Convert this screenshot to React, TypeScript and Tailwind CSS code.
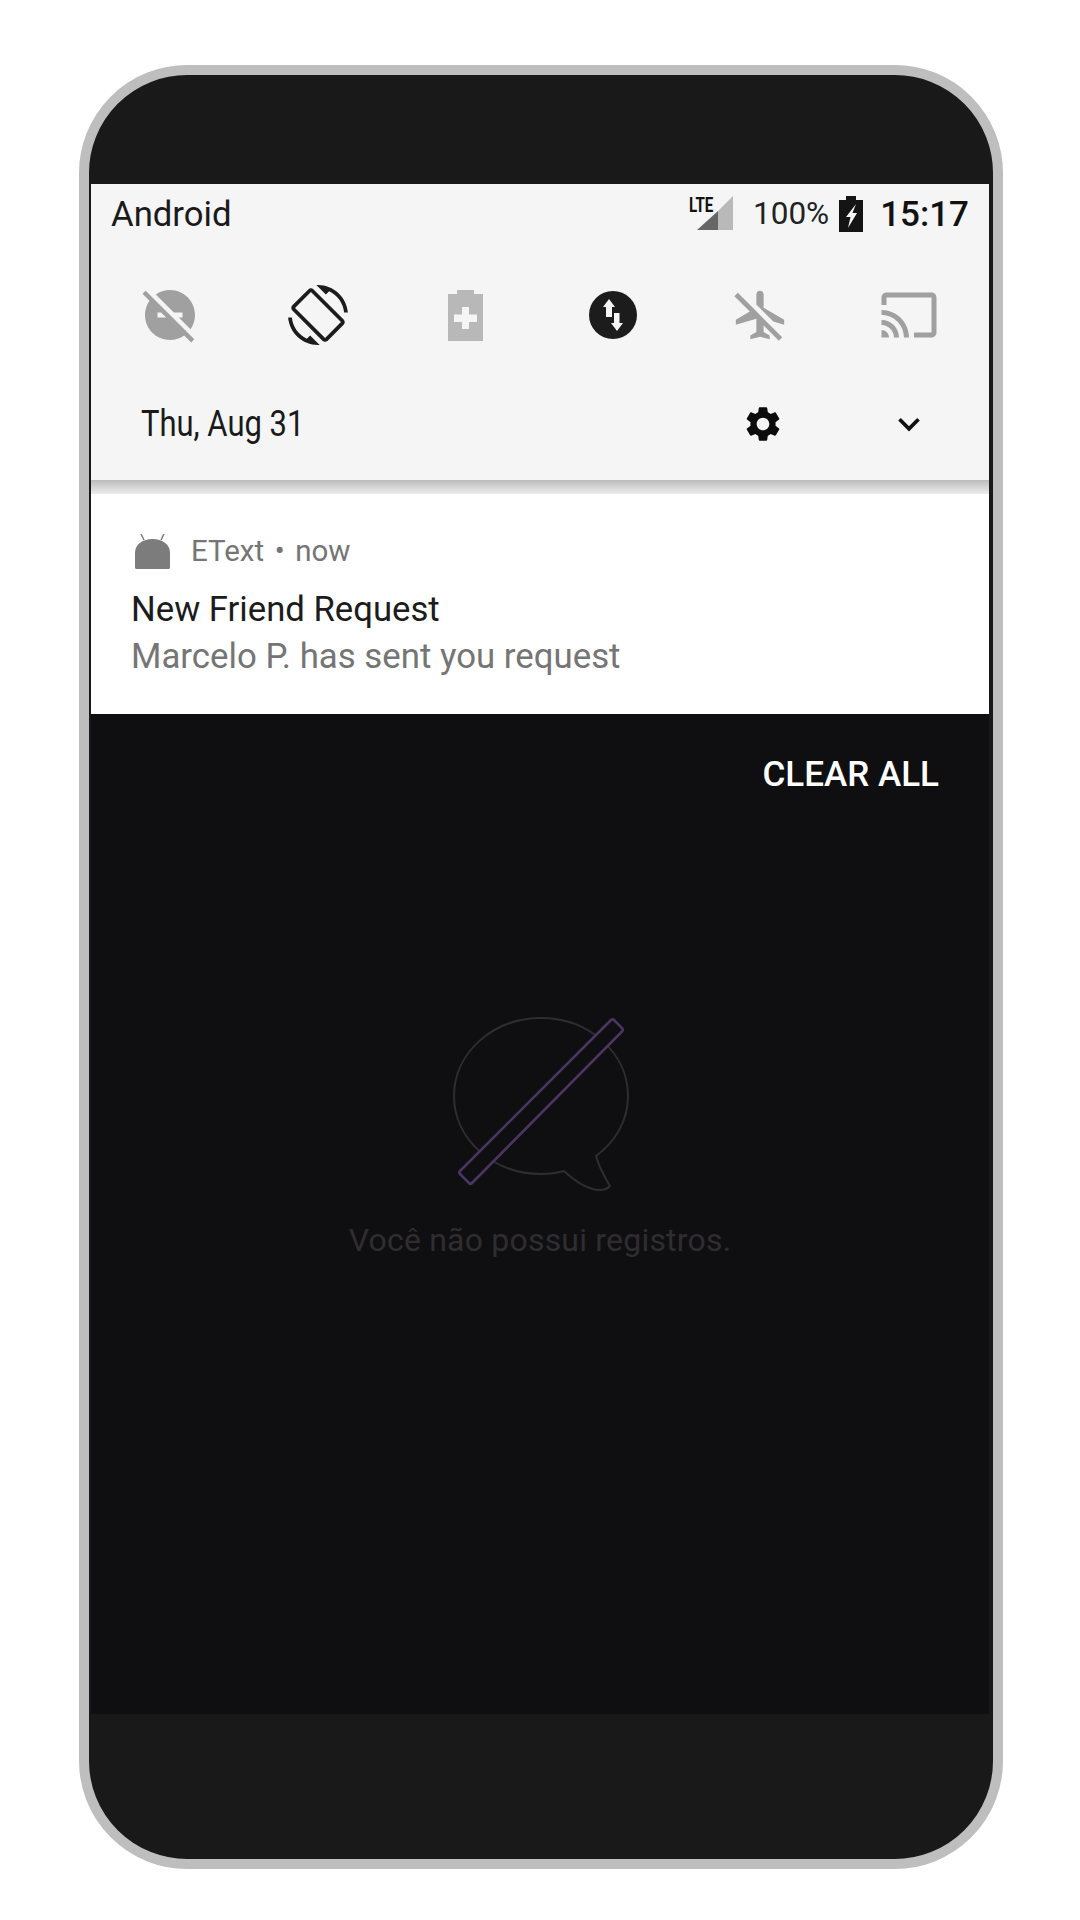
const roboto = "font-['Roboto',sans-serif]";

const QuickIcon = ({ d, color, size = 60 }: { d: string; color: string; size?: number }) => (
  <div className="flex w-[60px] justify-center">
    <svg width={size} height={size} viewBox="0 0 24 24" fill={color}>
      <path d={d} />
    </svg>
  </div>
);

const StatusBar = () => (
  <div className="flex h-[58px] items-center pl-[20px] pr-[20px] pt-[2px] text-[#1a1a1a]">
    <span className="text-[34.7px] leading-none">Android</span>
    <div className="relative ml-auto h-[36px] w-[44px]">
      <svg className="absolute right-0 top-0" width="36" height="34" viewBox="0 0 36 34">
        <path d="M36 0v34H21V15z" fill="#b9b9b9" />
        <path d="M21 15v19H0z" fill="#666666" />
      </svg>
      <span className="absolute left-0 top-[-3px] origin-left scale-x-[0.72] text-[21px] font-bold leading-[24px] text-[#111]">
        LTE
      </span>
    </div>
    <span className="ml-[20px] text-[31.5px] leading-none text-[#222]">100%</span>
    <svg className="ml-[10px]" width="24" height="36" viewBox="0 0 24 36">
      <path d="M0 4h7V0h10v4h7v32H0z" fill="#141414" />
      <path d="M17 8 7 21h4.500L9 32l9-15h-4.500z" fill="#f5f5f5" />
    </svg>
    <span className="ml-[17px] text-[35px] font-medium leading-none text-[#111]">15:17</span>
  </div>
);

const QuickSettings = () => (
  <div className="flex h-[146px] items-center justify-between pl-[49px] pr-[50px]">
    <QuickIcon
      color="#a0a0a0"
      d="M17 11v2h-1.46l4.68 4.68C21.34 16.07 22 14.11 22 12c0-5.52-4.48-10-10-10-2.11 0-4.07.66-5.68 1.78L13.54 11H17zM2.27 2.27L1 3.54l2.78 2.78C2.66 7.93 2 9.89 2 12c0 5.52 4.48 10 10 10 2.11 0 4.07-.66 5.68-1.78L20.46 23l1.27-1.27L11 11 2.27 2.27zM7 13v-2h1.46l2 2H7z"
    />
    <QuickIcon
      color="#1c1c1c"
      d="M16.48 2.52c3.27 1.55 5.61 4.72 5.97 8.48h1.5C23.44 4.84 18.29 0 12 0l-.66.03 3.81 3.81 1.33-1.32zm-6.25-.77c-.59-.59-1.54-.59-2.12 0L1.75 8.11c-.59.59-.59 1.54 0 2.12l12.02 12.02c.59.59 1.54.59 2.12 0l6.36-6.36c.59-.59.59-1.54 0-2.12L10.23 1.75zm4.6 19.44L2.81 9.17l6.36-6.36 12.02 12.02-6.36 6.36zm-7.31.29C4.25 19.94 1.91 16.76 1.55 13H.05C.56 19.16 5.71 24 12 24l.66-.03-3.81-3.81-1.33 1.32z"
    />
    <div className="flex w-[60px] justify-center">
      <svg width="35" height="51" viewBox="0 0 35 51">
        <path d="M9 0h17v4h9v47H0V4h9z" fill="#b8b8b8" />
        <path d="M14 17h7v7.500h8v7.500h-8v7h-7v-7H6v-7.500h8z" fill="#f5f5f5" />
      </svg>
    </div>
    <div className="flex w-[60px] justify-center">
      <svg width="48" height="48" viewBox="0 0 48 48">
        <circle cx="24" cy="24" r="24" fill="#1c1c1c" />
        <path d="M20 8l-6 8h3v10h6V16h3z" fill="#f5f5f5" />
        <path d="M28 40l6-8h-3.500V22h-5.500v10H22z" fill="#f5f5f5" />
      </svg>
    </div>
    <div className="flex w-[60px] justify-center pr-[2px]">
      <svg width="58" height="58" viewBox="0 0 24 24" fill="#a0a0a0">
        <path d="M10.5 7.67V3.5c0-.83.67-1.5 1.5-1.5s1.5.67 1.5 1.5V9l8.5 5v2l-4.49-1.32-7.01-7.01zm9.28 14.94l1.41-1.41-7.69-7.7-3.94-3.94-6.75-6.75-1.42 1.41 6.38 6.38L2 14v2l8.5-2.5V19L8 20.5V22l4-1 4 1v-1.5L13.5 19v-2.67l6.28 6.28z" />
      </svg>
    </div>
    <QuickIcon
      color="#a0a0a0"
      d="M21 3H3c-1.1 0-2 .9-2 2v3h2V5h18v14h-7v2h7c1.1 0 2-.9 2-2V5c0-1.1-.9-2-2-2zM1 18v3h3c0-1.66-1.34-3-3-3zm0-4v2c2.76 0 5 2.24 5 5h2c0-3.87-3.13-7-7-7zm0-4v2c4.97 0 9 4.03 9 9h2c0-6.08-4.93-11-11-11z"
    />
  </div>
);

const DateRow = () => (
  <div className="flex h-[68px] items-center pl-[50px] pr-[61px] pt-[4px]">
    <span className="origin-left scale-x-[0.86] whitespace-nowrap text-[36px] leading-none text-[#1a1a1a]">
      Thu, Aug 31
    </span>
    <svg className="ml-auto" width="42" height="42" viewBox="0 0 24 24" fill="#0c0c0c">
      <path d="M19.14 12.94c.04-.3.06-.61.06-.94 0-.32-.02-.64-.07-.94l2.03-1.58c.18-.14.23-.41.12-.61l-1.92-3.32c-.12-.22-.37-.29-.59-.22l-2.39.96c-.5-.38-1.03-.7-1.62-.94l-.36-2.54c-.04-.24-.24-.41-.48-.41h-3.84c-.24 0-.43.17-.47.41l-.36 2.54c-.59.24-1.13.57-1.62.94l-2.39-.96c-.22-.08-.47 0-.59.22L2.74 8.87c-.12.21-.08.47.12.61l2.03 1.58c-.05.3-.09.63-.09.94s.02.64.07.94l-2.03 1.58c-.18.14-.23.41-.12.61l1.92 3.32c.12.22.37.29.59.22l2.39-.96c.5.38 1.03.7 1.62.94l.36 2.54c.05.24.24.41.48.41h3.84c.24 0 .44-.17.47-.41l.36-2.54c.59-.24 1.13-.56 1.62-.94l2.39.96c.22.08.47 0 .59-.22l1.92-3.32c.12-.22.07-.47-.12-.61l-2.01-1.58zM12 15.6c-1.98 0-3.6-1.62-3.6-3.6s1.62-3.6 3.6-3.6 3.6 1.62 3.6 3.6-1.62 3.6-3.6 3.6z" />
    </svg>
    <svg className="ml-[106px]" width="38" height="38" viewBox="0 0 24 24" fill="none" stroke="#111" strokeWidth="2.4">
      <path d="M6 9l6 6 6-6" />
    </svg>
  </div>
);

const Notification = () => (
  <div className="flex h-[220px] flex-col bg-white pl-[40px]">
    <div className="mt-[38px] flex h-[40px] items-center">
      <svg width="37" height="36" viewBox="0 0 37 36" className="ml-[3px]">
        <path d="M1 34V19C1 10 9 5 18.500 5S36 10 36 19v15l-1 1H2z" fill="#7c7c7c" />
        <path d="M7 0l3 6M30 0l-3 6" stroke="#7c7c7c" strokeWidth="1.500" />
      </svg>
      <span className="ml-[20px] text-[29.500px] leading-none text-[#757575]">
        EText<span className="mx-[10.500px]">•</span>now
      </span>
    </div>
    <span className="mt-[17px] text-[34.700px] leading-[40px] text-[#1c1c1c]">New Friend Request</span>
    <span className="mt-[7px] text-[34.800px] leading-[40px] text-[#757575]">Marcelo P. has sent you request</span>
  </div>
);

const EmptyState = () => (
  <div className="flex flex-1 flex-col bg-[#0f0f11]">
    <div className="flex justify-end pr-[50px] pt-[43px]">
      <span className="text-[35px] font-medium leading-[36px] text-white">CLEAR ALL</span>
    </div>
    <div className="mt-[207px] flex flex-col items-center">
      <svg width="420" height="200" viewBox="0 0 420 200" fill="none">
        <path
          d="M266 156C285 142 298 121 298 96C298 53 259 18 211 18C163 18 124 53 124 96C124 139 163 174 211 174C219 174 227 173 234 171C247 183 260 190 270 190C274 190 277 189 280 186C274 176 269 167 266 156Z"
          stroke="#2f2d2f"
          strokeWidth="2"
        />
        <path
          d="M281 20Q282.500 18.500 284 20L292 28Q293.500 30 292 31.500L142 183Q140.500 184.500 139 183L130 174Q128.500 172.500 130 171Z"
          fill="#0f0f11"
          stroke="#4b3663"
          strokeWidth="2.500"
        />
      </svg>
      <span className="mt-[22px] text-[32px] leading-[36px] tracking-[0.2px] text-[#2f2d30]">
        Você não possui registros.
      </span>
    </div>
  </div>
);

export default function App() {
  return (
    <div className={`min-h-[1920px] bg-white pl-[79px] pt-[65px] ${roboto}`}>
      <div className="flex h-[1804px] w-[924px] flex-col overflow-hidden rounded-[108px] border-[10px] border-[#bebebe] bg-[#191919]">
        <div className="h-[109px] shrink-0" />
        <div className="flex flex-1 flex-col pl-[2px] pr-[4px]">
          <div className="h-[296px] bg-[#f5f5f5]">
            <StatusBar />
            <QuickSettings />
            <DateRow />
          </div>
          <div className="h-[14px] bg-linear-to-b from-[#bcbcbc] to-[#ececec]" />
          <Notification />
          <EmptyState />
        </div>
        <div className="h-[145px] shrink-0" />
      </div>
    </div>
  );
}
